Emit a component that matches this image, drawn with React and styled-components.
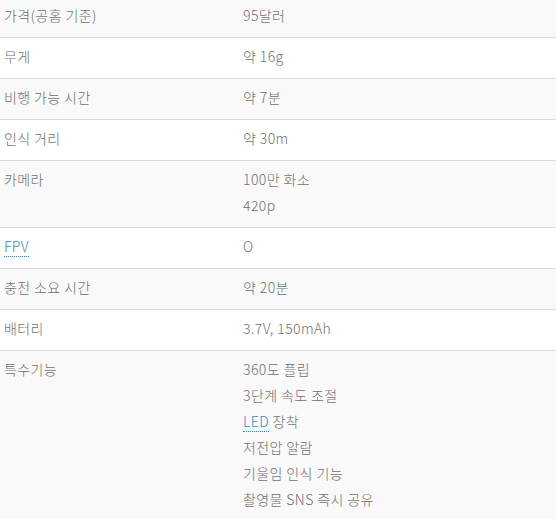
import React from "react";
import styled, { createGlobalStyle } from "styled-components";

const GlobalStyle = createGlobalStyle`
  body {
    margin: 0;
    background: #ffffff;
    font-family: "Noto Sans CJK KR", "Noto Sans", sans-serif;
    overflow: hidden;
  }
`;

const Table = styled.div`
  margin-top: -3px;
  width: 556px;
  color: #707070;
  font-size: 14px;
  font-weight: 300;
  letter-spacing: 0.4px;
`;

const Row = styled.div`
  display: grid;
  grid-template-columns: 239px 1fr;
  padding: 5px 4px 9px 4px;
  border-bottom: 1px solid #dddddd;
  background: ${(props) => (props.$shaded ? "#f9f9f9" : "#ffffff")};
`;

const Cell = styled.div`
  display: flex;
  flex-direction: column;
`;

const Line = styled.span`
  line-height: 26px;
  height: 26px;
  white-space: nowrap;
`;

const Term = styled.a`
  color: #2a8bc8;
  text-decoration: none;
  border-bottom: 1px dotted #2a8bc8;
`;

const rows = [
  { label: "가격(공홈 기준)", values: ["95달러"] },
  { label: "무게", values: ["약 16g"] },
  { label: "비행 가능 시간", values: ["약 7분"] },
  { label: "인식 거리", values: ["약 30m"] },
  { label: "카메라", values: ["100만 화소", "420p"] },
  { label: <Term>FPV</Term>, values: ["O"] },
  { label: "충전 소요 시간", values: ["약 20분"] },
  { label: "배터리", values: ["3.7V, 150mAh"] },
  {
    label: "특수기능",
    values: [
      "360도 플립",
      "3단계 속도 조절",
      <>
        <Term>LED</Term> 장착
      </>,
      "저전압 알람",
      "기울임 인식 기능",
      "촬영물 SNS 즉시 공유",
    ],
  },
];

const App = () => {
  return (
    <>
      <GlobalStyle />
      <Table>
        {rows.map((row, i) => (
          <Row key={i} $shaded={i % 2 === 0}>
            <Cell>
              <Line>{row.label}</Line>
            </Cell>
            <Cell>
              {row.values.map((v, j) => (
                <Line key={j}>{v}</Line>
              ))}
            </Cell>
          </Row>
        ))}
      </Table>
    </>
  );
};

export default App;
